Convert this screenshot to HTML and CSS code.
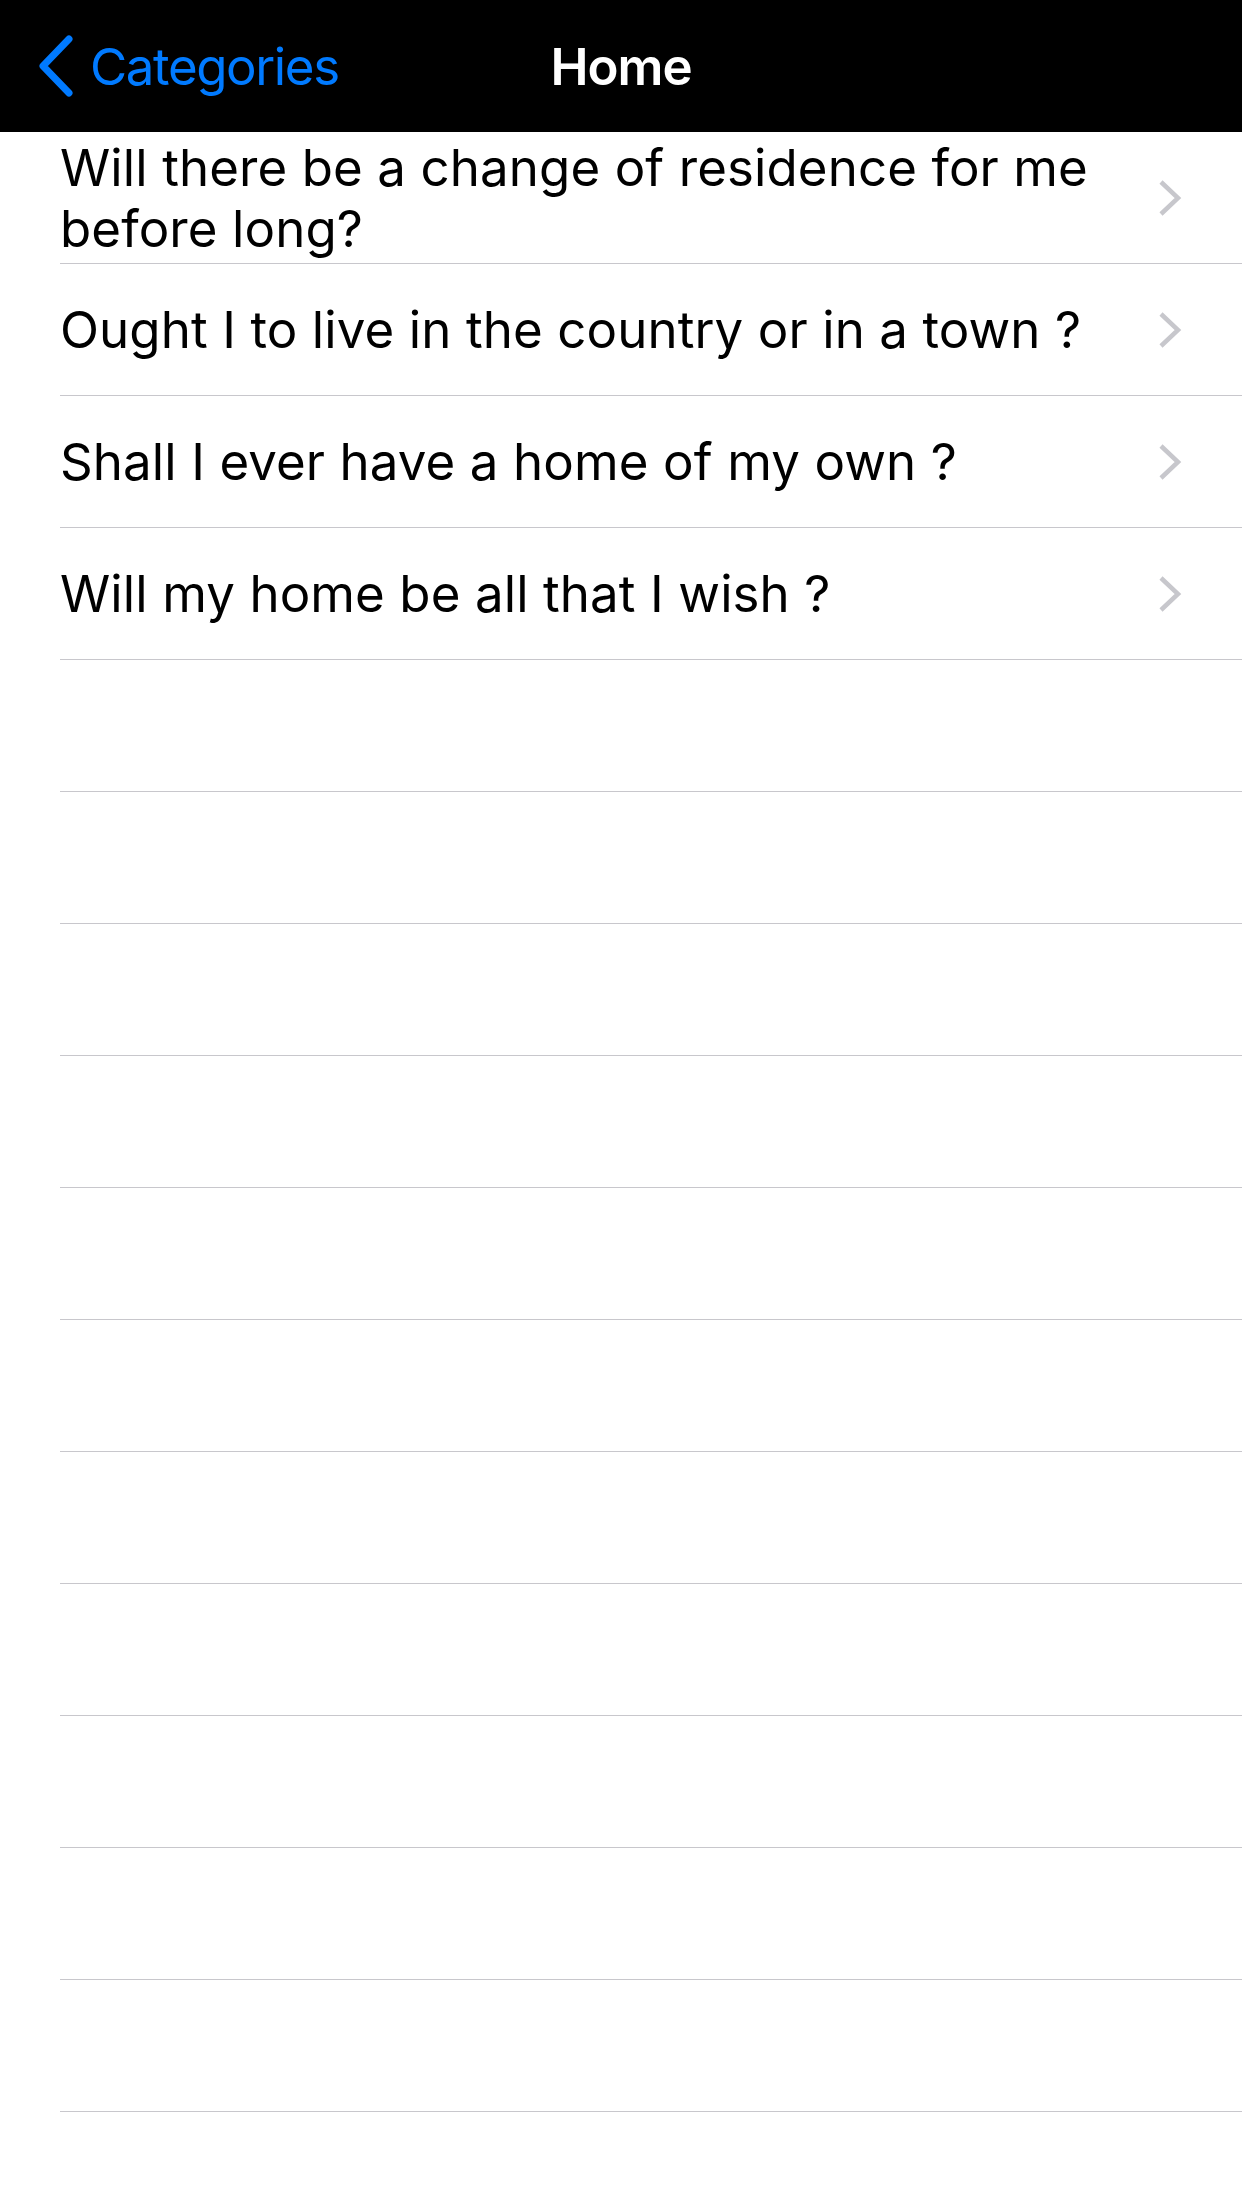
FILE: index.html
```html
<!DOCTYPE html>
<html lang="en">
  <head>
    <meta charset="UTF-8" />
    <meta name="viewport" content="width=device-width, initial-scale=1.0" />
    <title>Home</title>
    <link rel="stylesheet" href="styles.css">
  </head>
  <body>
    <div class="navbar">
      <a class="back" href="#">
        <svg class="back-icon" width="36" height="62" viewBox="0 0 36 62">
          <polyline points="31,4 5,31 31,58" />
        </svg>
        <span>Categories</span>
      </a>
      <div class="title">Home</div>
      <div></div>
    </div>

    <ul class="list">
      <li class="row">
        <span class="label">Will there be a change of residence for me before long?</span>
        <svg class="chevron" width="24" height="38" viewBox="0 0 24 38"><polyline points="3,3 20,19 3,35" /></svg>
      </li>
      <li class="row">
        <span class="label">Ought I to live in the country or in a town ?</span>
        <svg class="chevron" width="24" height="38" viewBox="0 0 24 38"><polyline points="3,3 20,19 3,35" /></svg>
      </li>
      <li class="row">
        <span class="label">Shall I ever have a home of my own ?</span>
        <svg class="chevron" width="24" height="38" viewBox="0 0 24 38"><polyline points="3,3 20,19 3,35" /></svg>
      </li>
      <li class="row">
        <span class="label">Will my home be all that I wish ?</span>
        <svg class="chevron" width="24" height="38" viewBox="0 0 24 38"><polyline points="3,3 20,19 3,35" /></svg>
      </li>
      <li class="row"></li>
      <li class="row"></li>
      <li class="row"></li>
      <li class="row"></li>
      <li class="row"></li>
      <li class="row"></li>
      <li class="row"></li>
      <li class="row"></li>
      <li class="row"></li>
      <li class="row"></li>
      <li class="row"></li>
      <li class="row"></li>
      <li class="row"></li>
    </ul>
  </body>
</html>
```

FILE: styles.css
```css
html,
body {
  margin: 0;
  height: 2208px;
  overflow: hidden;
  background-color: #ffffff;
  font-family: Inter, 'Noto Sans', sans-serif;
}
.navbar {
  display: grid;
  grid-template-columns: 1fr auto 1fr;
  align-items: center;
  height: 132px;
  background-color: #000000;
}
.back {
  display: flex;
  align-items: center;
  gap: 16px;
  padding-left: 38px;
  color: #007aff;
  font-size: 51px;
  text-decoration: none;
  letter-spacing: -1.4px;
}
.back-icon polyline {
  fill: none;
  stroke: #007aff;
  stroke-width: 7;
  stroke-linecap: round;
  stroke-linejoin: round;
}
.title {
  color: #ffffff;
  font-size: 51px;
  font-weight: 600;
  letter-spacing: -1px;
}
.list {
  list-style: none;
  margin: 0;
  padding: 0;
}
.row {
  display: flex;
  align-items: center;
  min-height: 131px;
  margin-left: 60px;
  padding-right: 60px;
  border-bottom: 1px solid #c8c7cc;
}
.label {
  flex: 1;
  padding-right: 40px;
  color: #000000;
  font-size: 51px;
  line-height: 61px;
  letter-spacing: 0.1px;
}
.chevron polyline {
  fill: none;
  stroke: #c7c7cc;
  stroke-width: 4.5;
}
```
